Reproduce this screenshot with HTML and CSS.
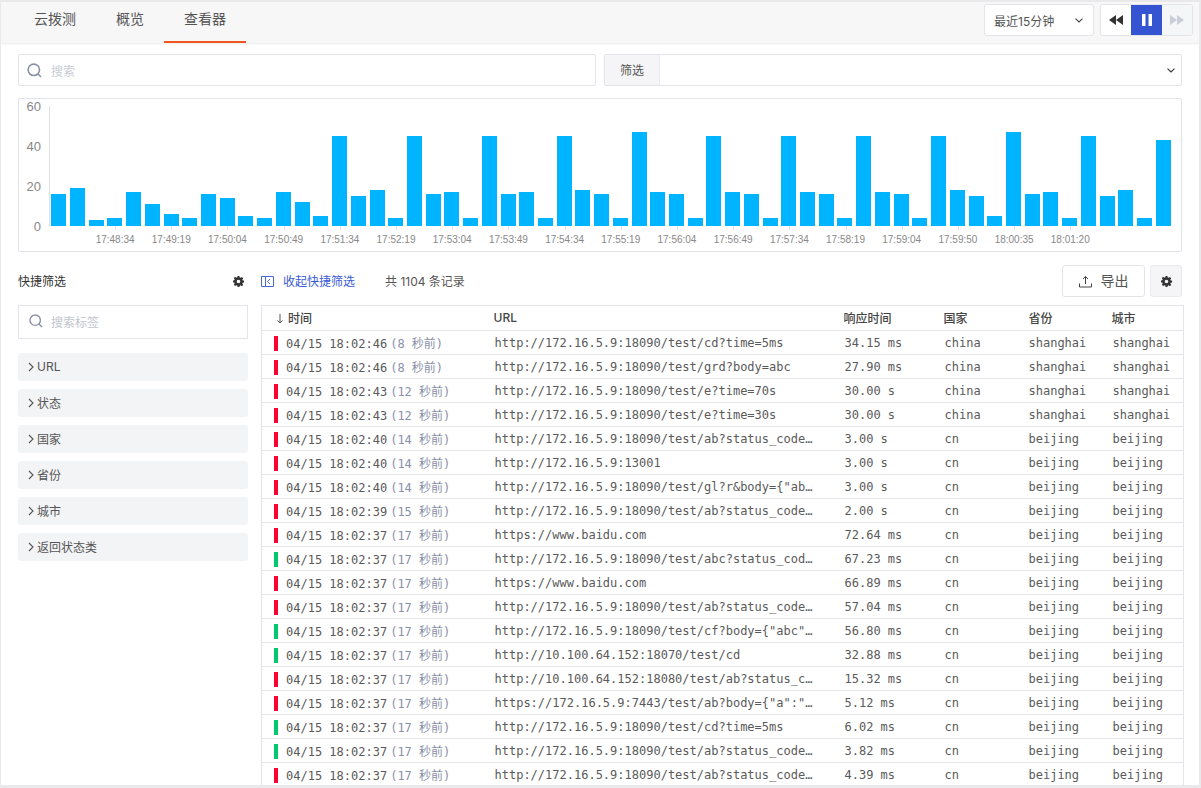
FILE: index.html
```html
<!DOCTYPE html>
<html lang="zh-CN">
  <head>
    <meta charset="UTF-8" />
    <title>云拨测 - 查看器</title>
    <link rel="stylesheet" href="styles.css">
  </head>
  <body>
    <div class="page">
      <header class="topbar">
        <nav class="tabs">
          <a class="tab">云拨测</a>
          <a class="tab">概览</a>
          <a class="tab tab--active">查看器</a>
        </nav>
        <div class="topbar__tools">
          <div class="range">
            <span>最近15分钟</span>
            <svg class="chevron" width="8" height="5" viewBox="0 0 8 5"><path d="M.5.700L4 4 7.500.700" fill="none" stroke="#444" stroke-width="1.100"/></svg>
          </div>
          <div class="player">
            <button class="player__btn">
              <svg width="14" height="10" viewBox="0 0 14 10"><path d="M7 0v10L0 5zM14 0v10L7 5z" fill="#333"/></svg>
            </button>
            <button class="player__btn player__btn--active">
              <svg width="10" height="12" viewBox="0 0 10 12"><path d="M0 0h3.500v12H0zM6.500 0H10v12H6.500z" fill="#fff"/></svg>
            </button>
            <button class="player__btn player__btn--off">
              <svg width="14" height="10" viewBox="0 0 14 10"><path d="M0 0v10l7-5zM7 0v10l7-5z" fill="#c9ced8"/></svg>
            </button>
          </div>
        </div>
      </header>

      <section class="filters">
        <div class="search">
          <svg class="search__icon" width="15" height="15" viewBox="0 0 15 15"><circle cx="6.800" cy="6.800" r="5.700" fill="none" stroke="#8a90a6" stroke-width="1.600"/><path d="M10.800 10.800l3.200 3.200" stroke="#8a90a6" stroke-width="1.600"/></svg>
          <span class="search__text">搜索</span>
        </div>
        <div class="filter">
          <span class="filter__label">筛选</span>
          <svg class="chevron" width="8" height="5" viewBox="0 0 8 5"><path d="M.5.700L4 4 7.500.700" fill="none" stroke="#333" stroke-width="1.100"/></svg>
        </div>
      </section>

      <section class="chart">
        <div class="chart__y">
          <span>60</span><span>40</span><span>20</span><span>0</span>
        </div>
        <div class="chart__main">
          <div class="bars">
            <i style="height:32px"></i><i style="height:38px"></i><i style="height:6px"></i><i style="height:8px"></i><i style="height:34px"></i><i style="height:22px"></i>
            <i style="height:12px"></i><i style="height:8px"></i><i style="height:32px"></i><i style="height:28px"></i><i style="height:10px"></i><i style="height:8px"></i>
            <i style="height:34px"></i><i style="height:24px"></i><i style="height:10px"></i><i style="height:90px"></i><i style="height:30px"></i><i style="height:36px"></i>
            <i style="height:8px"></i><i style="height:90px"></i><i style="height:32px"></i><i style="height:34px"></i><i style="height:8px"></i><i style="height:90px"></i>
            <i style="height:32px"></i><i style="height:34px"></i><i style="height:8px"></i><i style="height:90px"></i><i style="height:36px"></i><i style="height:32px"></i>
            <i style="height:8px"></i><i style="height:94px"></i><i style="height:34px"></i><i style="height:32px"></i><i style="height:8px"></i><i style="height:90px"></i>
            <i style="height:34px"></i><i style="height:32px"></i><i style="height:8px"></i><i style="height:90px"></i><i style="height:34px"></i><i style="height:32px"></i>
            <i style="height:8px"></i><i style="height:90px"></i><i style="height:34px"></i><i style="height:32px"></i><i style="height:8px"></i><i style="height:90px"></i>
            <i style="height:36px"></i><i style="height:30px"></i><i style="height:10px"></i><i style="height:94px"></i><i style="height:32px"></i><i style="height:34px"></i>
            <i style="height:8px"></i><i style="height:90px"></i><i style="height:30px"></i><i style="height:36px"></i><i style="height:8px"></i><i style="height:86px"></i>
          </div>
          <div class="ticks">
            <span>17:48:34</span><span>17:49:19</span><span>17:50:04</span><span>17:50:49</span><span>17:51:34</span><span>17:52:19</span>
            <span>17:53:04</span><span>17:53:49</span><span>17:54:34</span><span>17:55:19</span><span>17:56:04</span><span>17:56:49</span>
            <span>17:57:34</span><span>17:58:19</span><span>17:59:04</span><span>17:59:50</span><span>18:00:35</span><span>18:01:20</span>
          </div>
        </div>
      </section>

      <div class="content">
        <aside class="quick">
          <div class="quick__head">
            <span class="quick__title">快捷筛选</span>
            <svg width="11" height="11" viewBox="0 0 24 24"><path fill="#333" fill-rule="evenodd" d="M10 0h4l.7 3.200 1.900.8 2.800-1.800 2.800 2.800-1.800 2.800.8 1.900 2.800.3v4l-2.800.7-.8 1.900 1.800 2.800-2.800 2.800-2.800-1.800-1.900.8L14 24h-4l-.7-3.200-1.900-.8-2.800 1.800-2.800-2.800 1.800-2.800-.8-1.900L0 14v-4l2.800-.7.8-1.900L1.800 4.600l2.800-2.800 2.800 1.800 1.900-.8zM12 8a4 4 0 1 0 0 8 4 4 0 0 0 0-8z"/></svg>
          </div>
          <div class="quick__search">
            <svg width="14" height="14" viewBox="0 0 14 14"><circle cx="6.200" cy="6.200" r="5.200" fill="none" stroke="#8a90a6" stroke-width="1.400"/><path d="M10 10l3 3" stroke="#8a90a6" stroke-width="1.400"/></svg>
            <span>搜索标签</span>
          </div>
          <ul class="facets">
            <li class="facet"><svg width="6" height="10" viewBox="0 0 6 10"><path d="M1 1l4 4-4 4" fill="none" stroke="#555" stroke-width="1.100"/></svg>URL</li>
            <li class="facet"><svg width="6" height="10" viewBox="0 0 6 10"><path d="M1 1l4 4-4 4" fill="none" stroke="#555" stroke-width="1.100"/></svg>状态</li>
            <li class="facet"><svg width="6" height="10" viewBox="0 0 6 10"><path d="M1 1l4 4-4 4" fill="none" stroke="#555" stroke-width="1.100"/></svg>国家</li>
            <li class="facet"><svg width="6" height="10" viewBox="0 0 6 10"><path d="M1 1l4 4-4 4" fill="none" stroke="#555" stroke-width="1.100"/></svg>省份</li>
            <li class="facet"><svg width="6" height="10" viewBox="0 0 6 10"><path d="M1 1l4 4-4 4" fill="none" stroke="#555" stroke-width="1.100"/></svg>城市</li>
            <li class="facet"><svg width="6" height="10" viewBox="0 0 6 10"><path d="M1 1l4 4-4 4" fill="none" stroke="#555" stroke-width="1.100"/></svg>返回状态类</li>
          </ul>
        </aside>

        <main class="records">
          <div class="toolbar">
            <a class="toolbar__collapse">
              <svg width="13" height="11" viewBox="0 0 13 11"><path d="M.5.500h12v10H.5zM4.500.500v10M9 3L6.500 5.500 9 8" fill="none" stroke="#4a68d8" stroke-width="1"/></svg>
              <span>收起快捷筛选</span>
            </a>
            <span class="toolbar__count">共 1104 条记录</span>
            <button class="btn-export">
              <svg width="13" height="13" viewBox="0 0 13 13"><path d="M6.500 9V1.500M4 4l2.500-2.500L9 4M.5 8.500v3.500h12V8.500" fill="none" stroke="#444" stroke-width="1"/></svg>
              <span>导出</span>
            </button>
            <button class="btn-gear">
              <svg width="11" height="11" viewBox="0 0 24 24"><path fill="#333" fill-rule="evenodd" d="M10 0h4l.7 3.200 1.900.8 2.800-1.800 2.800 2.800-1.800 2.800.8 1.900 2.800.3v4l-2.800.7-.8 1.900 1.800 2.800-2.800 2.800-2.800-1.800-1.900.8L14 24h-4l-.7-3.200-1.900-.8-2.800 1.800-2.800-2.800 1.800-2.800-.8-1.900L0 14v-4l2.800-.7.8-1.900L1.800 4.600l2.800-2.800 2.800 1.800 1.900-.8zM12 8a4 4 0 1 0 0 8 4 4 0 0 0 0-8z"/></svg>
            </button>
          </div>

          <table class="log">
            <colgroup>
              <col class="col-time" /><col class="col-url" /><col class="col-ms" /><col class="col-country" /><col class="col-prov" /><col class="col-city" />
            </colgroup>
            <thead>
              <tr>
                <th class="th-time"><svg class="sort" width="6" height="10" viewBox="0 0 6 10"><path d="M3 0v9M.5 6.500L3 9l2.500-2.500" fill="none" stroke="#555" stroke-width="1"/></svg>时间</th><th>URL</th><th>响应时间</th><th>国家</th><th>省份</th><th>城市</th>
              </tr>
            </thead>
            <tbody>
              <tr><td><b class="st st--bad"></b>04/15 18:02:46<em>(8 秒前)</em></td><td>http://172.16.5.9:18090/test/cd?time=5ms</td><td>34.15 ms</td><td>china</td><td>shanghai</td><td>shanghai</td></tr>
              <tr><td><b class="st st--bad"></b>04/15 18:02:46<em>(8 秒前)</em></td><td>http://172.16.5.9:18090/test/grd?body=abc</td><td>27.90 ms</td><td>china</td><td>shanghai</td><td>shanghai</td></tr>
              <tr><td><b class="st st--bad"></b>04/15 18:02:43<em>(12 秒前)</em></td><td>http://172.16.5.9:18090/test/e?time=70s</td><td>30.00 s</td><td>china</td><td>shanghai</td><td>shanghai</td></tr>
              <tr><td><b class="st st--bad"></b>04/15 18:02:43<em>(12 秒前)</em></td><td>http://172.16.5.9:18090/test/e?time=30s</td><td>30.00 s</td><td>china</td><td>shanghai</td><td>shanghai</td></tr>
              <tr><td><b class="st st--bad"></b>04/15 18:02:40<em>(14 秒前)</em></td><td>http://172.16.5.9:18090/test/ab?status_code…</td><td>3.00 s</td><td>cn</td><td>beijing</td><td>beijing</td></tr>
              <tr><td><b class="st st--bad"></b>04/15 18:02:40<em>(14 秒前)</em></td><td>http://172.16.5.9:13001</td><td>3.00 s</td><td>cn</td><td>beijing</td><td>beijing</td></tr>
              <tr><td><b class="st st--bad"></b>04/15 18:02:40<em>(14 秒前)</em></td><td>http://172.16.5.9:18090/test/gl?r&amp;body={"ab…</td><td>3.00 s</td><td>cn</td><td>beijing</td><td>beijing</td></tr>
              <tr><td><b class="st st--bad"></b>04/15 18:02:39<em>(15 秒前)</em></td><td>http://172.16.5.9:18090/test/ab?status_code…</td><td>2.00 s</td><td>cn</td><td>beijing</td><td>beijing</td></tr>
              <tr><td><b class="st st--bad"></b>04/15 18:02:37<em>(17 秒前)</em></td><td>https://www.baidu.com</td><td>72.64 ms</td><td>cn</td><td>beijing</td><td>beijing</td></tr>
              <tr><td><b class="st st--ok"></b>04/15 18:02:37<em>(17 秒前)</em></td><td>http://172.16.5.9:18090/test/abc?status_cod…</td><td>67.23 ms</td><td>cn</td><td>beijing</td><td>beijing</td></tr>
              <tr><td><b class="st st--bad"></b>04/15 18:02:37<em>(17 秒前)</em></td><td>https://www.baidu.com</td><td>66.89 ms</td><td>cn</td><td>beijing</td><td>beijing</td></tr>
              <tr><td><b class="st st--bad"></b>04/15 18:02:37<em>(17 秒前)</em></td><td>http://172.16.5.9:18090/test/ab?status_code…</td><td>57.04 ms</td><td>cn</td><td>beijing</td><td>beijing</td></tr>
              <tr><td><b class="st st--ok"></b>04/15 18:02:37<em>(17 秒前)</em></td><td>http://172.16.5.9:18090/test/cf?body={"abc"…</td><td>56.80 ms</td><td>cn</td><td>beijing</td><td>beijing</td></tr>
              <tr><td><b class="st st--ok"></b>04/15 18:02:37<em>(17 秒前)</em></td><td>http://10.100.64.152:18070/test/cd</td><td>32.88 ms</td><td>cn</td><td>beijing</td><td>beijing</td></tr>
              <tr><td><b class="st st--bad"></b>04/15 18:02:37<em>(17 秒前)</em></td><td>http://10.100.64.152:18080/test/ab?status_c…</td><td>15.32 ms</td><td>cn</td><td>beijing</td><td>beijing</td></tr>
              <tr><td><b class="st st--bad"></b>04/15 18:02:37<em>(17 秒前)</em></td><td>https://172.16.5.9:7443/test/ab?body={"a":"…</td><td>5.12 ms</td><td>cn</td><td>beijing</td><td>beijing</td></tr>
              <tr><td><b class="st st--ok"></b>04/15 18:02:37<em>(17 秒前)</em></td><td>http://172.16.5.9:18090/test/cd?time=5ms</td><td>6.02 ms</td><td>cn</td><td>beijing</td><td>beijing</td></tr>
              <tr><td><b class="st st--ok"></b>04/15 18:02:37<em>(17 秒前)</em></td><td>http://172.16.5.9:18090/test/ab?status_code…</td><td>3.82 ms</td><td>cn</td><td>beijing</td><td>beijing</td></tr>
              <tr><td><b class="st st--bad"></b>04/15 18:02:37<em>(17 秒前)</em></td><td>http://172.16.5.9:18090/test/ab?status_code…</td><td>4.39 ms</td><td>cn</td><td>beijing</td><td>beijing</td></tr>
            </tbody>
          </table>
        </main>
      </div>
    </div>
  </body>
</html>
```

FILE: styles.css
```css
* {
  margin: 0;
  padding: 0;
  box-sizing: border-box;
}

html,
body {
  height: 100%;
  overflow: hidden;
}

body {
  font-family: Inter, "Noto Sans CJK SC", sans-serif;
  font-size: 12px;
  color: #555;
  background-color: #fff;
}

.page {
  height: 788px;
  border: solid #e9e9ec;
  border-width: 2px 2px 3px 1px;
  overflow: hidden;
}

/* top bar */
.topbar {
  height: 41px;
  padding-right: 6px;
  background-color: #f7f7f8;
  display: flex;
  justify-content: space-between;
  box-shadow: 0 1px 2px rgba(0, 0, 0, 0.08);
}

.tabs {
  display: flex;
  padding-left: 13px;
}

.tab {
  padding: 0 20px;
  font-size: 14px;
  line-height: 34px;
  color: #555;
  height: 41px;
}

.tab--active {
  border-bottom: 2px solid #f0561d;
}

.topbar__tools {
  display: flex;
  gap: 6px;
  padding-top: 2px;
}

.range {
  width: 110px;
  height: 32px;
  padding: 0 10px 0 9px;
  display: flex;
  align-items: center;
  justify-content: space-between;
  background-color: #fff;
  border: 1px solid #e3e4ea;
  border-radius: 3px;
  color: #555;
}

.chevron {
  flex: none;
}

.player {
  display: flex;
  width: 93px;
  height: 32px;
  border: 1px solid #e3e4ea;
  border-radius: 3px;
  overflow: hidden;
  background-color: #fff;
}

.player__btn {
  flex: 1;
  border: none;
  background: none;
  display: flex;
  align-items: center;
  justify-content: center;
}

.player__btn--active {
  background-color: #3554d1;
  flex: none;
  width: 31px;
}

.player__btn--off {
  background-color: #f5f6f8;
}

/* search + filter */
.filters {
  display: grid;
  grid-template-columns: 1fr 1fr;
  gap: 8px;
  padding: 11px 17px 12px;
}

.search,
.filter {
  height: 32px;
  display: flex;
  align-items: center;
  background-color: #fff;
  border: 1px solid #e3e4ea;
  border-radius: 2px;
}

.search {
  padding-left: 8px;
  gap: 9px;
}

.search__text {
  color: #c9ccd4;
}

.filter {
  justify-content: space-between;
  padding-right: 6px;
}

.filter__label {
  width: 55px;
  height: 30px;
  line-height: 32px;
  text-align: center;
  background-color: #f5f5f7;
  border-right: 1px solid #e9e9ee;
}

/* chart */
.chart {
  margin: 0 17px;
  height: 154px;
  display: flex;
  border: 1px solid #e3e4ea;
  border-radius: 2px;
  font-family: "Liberation Sans", "Noto Sans CJK SC", sans-serif;
  color: #888;
}

.chart__y {
  width: 30px;
  height: 135px;
  padding-right: 8px;
  text-align: right;
  font-size: 13px;
  line-height: 15px;
  display: flex;
  flex-direction: column;
  justify-content: space-between;
}

.chart__main {
  flex: 1;
  padding-top: 7px;
}

.bars {
  width: 1124px;
  height: 120px;
  padding-left: 1.300px;
  display: flex;
  gap: 3.720px;
  align-items: flex-end;
  border-left: 1px solid #dfe0e4;
}

.bars i {
  display: block;
  flex: none;
  width: 15px;
  background-color: #00b4ff;
}

.ticks {
  display: flex;
  padding-left: 38px;
  padding-top: 8px;
  font-size: 10px;
  line-height: 12px;
}

.ticks span {
  position: relative;
  width: 56.200px;
  text-align: center;
}

.ticks span::before {
  content: "";
  position: absolute;
  left: 50%;
  top: -8px;
  width: 1px;
  height: 4px;
  background-color: #e3e4ea;
}

/* lower part */
.content {
  display: flex;
  padding-left: 17px;
  padding-top: 13px;
  gap: 13px;
}

.quick {
  width: 230px;
  flex: none;
}

.quick__head {
  height: 32px;
  padding-right: 4px;
  display: flex;
  align-items: center;
  justify-content: space-between;
}

.quick__title {
  color: #333;
  padding-bottom: 2px;
}

.quick__search {
  margin-top: 8px;
  height: 34px;
  padding: 0 0 2px 10px;
  display: flex;
  align-items: center;
  gap: 8px;
  border: 1px solid #e3e4ea;
  color: #c2c5ce;
}

.facets {
  margin-top: 14px;
  list-style: none;
  display: flex;
  flex-direction: column;
  gap: 8px;
}

.facet {
  height: 28px;
  padding: 0 0 1px 10px;
  display: flex;
  align-items: center;
  gap: 3px;
  background-color: #f3f4f6;
  border-radius: 3px;
  color: #555;
}

.records {
  width: 923px;
  flex: none;
}

.toolbar {
  height: 32px;
  padding-right: 2px;
  display: flex;
  align-items: center;
}

.toolbar__collapse {
  display: flex;
  align-items: center;
  gap: 9px;
  color: #3b5bd6;
}

.toolbar__collapse span {
  padding-bottom: 2px;
}

.toolbar__count {
  margin-left: 30px;
  flex: 1;
  padding-bottom: 1px;
}

.btn-export {
  width: 83px;
  height: 32px;
  font: inherit;
  font-size: 14px;
  color: #555;
  background-color: #fff;
  border: 1px solid #e3e4ea;
  border-radius: 3px;
  display: flex;
  align-items: center;
  justify-content: center;
  gap: 9px;
}

.btn-export span {
  padding-bottom: 2px;
}

.btn-gear {
  margin-left: 5px;
  width: 32px;
  height: 32px;
  background-color: #f5f5f7;
  border: 1px solid #e9e9ee;
  border-radius: 3px;
  display: flex;
  align-items: center;
  justify-content: center;
}

/* table */
.log {
  margin-top: 8px;
  width: 923px;
  table-layout: fixed;
  border-collapse: collapse;
  border: 1px solid #e3e4ea;
  font-family: "DejaVu Sans Mono", "Noto Sans CJK SC", monospace;
  font-size: 12px;
  color: #5a5a5a;
}

.col-time {
  width: 231px;
}

.col-url {
  width: 350px;
}

.col-ms {
  width: 100px;
}

.col-country {
  width: 85px;
}

.col-prov {
  width: 83px;
}

.log th {
  height: 25px;
  padding: 0 0 2px 1px;
  text-align: left;
  font-family: Inter, "Noto Sans CJK SC", sans-serif;
  font-weight: 500;
  font-size: 12px;
  color: #444;
}

.log .th-time {
  padding-left: 15px;
}

.sort {
  margin-right: 5px;
  vertical-align: -1px;
}

.log td {
  height: 24px;
  padding: 0 0 0 2px;
  border-top: 1px solid #e3e4ea;
  white-space: nowrap;
  overflow: hidden;
}

.log td:first-child {
  padding-left: 12px;
}

.log td:nth-child(5) {
  padding-left: 1px;
}

.log em {
  font-style: normal;
  color: #8a90a8;
  margin-left: 3px;
}

.st {
  display: inline-block;
  width: 4px;
  height: 15px;
  margin-right: 8px;
  vertical-align: -3px;
}

.st--bad {
  background-color: #ff0033;
}

.st--ok {
  background-color: #00c86e;
}
```
